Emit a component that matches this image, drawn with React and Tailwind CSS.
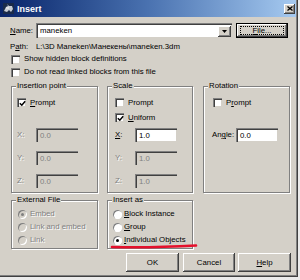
import React from "react";

const sunken =
  "border-t border-l border-[#808080] border-b-white border-r-white shadow-[inset_1px_1px_#404040,inset_-1px_-1px_#d4d0c8]";
const raised =
  "bg-[#d4d0c8] shadow-[inset_-1px_-1px_#404040,inset_1px_1px_#ffffff,inset_-2px_-2px_#808080]";
const dim = "text-[#808080] [text-shadow:1px_1px_#ffffff]";

const Check = ({ checked }) => (
  <span className={`w-[9px] h-[9px] shrink-0 bg-white flex items-center justify-center ${sunken}`}>
    {checked && (
      <svg width="7" height="7" viewBox="0 0 7 7">
        <path d="M0.8 3.2 L2.8 5.2 L6.2 1.2" stroke="#000" strokeWidth="1.5" fill="none" />
      </svg>
    )}
  </span>
);

const Radio = ({ checked, disabled }) => (
  <span
    className={`w-[9px] h-[9px] shrink-0 rounded-full flex items-center justify-center shadow-[inset_1px_1px_#808080,inset_-1px_-1px_#ffffff] ${
      disabled ? "bg-[#d4d0c8]" : "bg-white"
    }`}
  >
    {checked && <span className={`w-[3px] h-[3px] rounded-full ${disabled ? "bg-[#808080]" : "bg-black"}`} />}
  </span>
);

const Group = ({ title, className, children }) => (
  <div className={`relative border border-[#808080] shadow-[1px_1px_#ffffff,inset_1px_1px_#ffffff] ${className}`}>
    <span className="absolute -top-[6px] left-[4px] px-[1px] bg-[#d4d0c8] leading-[10px]">{title}</span>
    {children}
  </div>
);

const Field = ({ label, value, disabled, labelW }) => (
  <div className="flex items-center h-[14px]">
    <span className={`${labelW} ${disabled ? dim : ""}`}>{label}</span>
    <span
      className={`w-[42px] h-[14px] pl-[3px] flex items-center ${sunken} ${
        disabled ? "bg-[#d4d0c8] text-[#808080]" : "bg-white"
      }`}
    >
      {value}
    </span>
  </div>
);

const Button = ({ children, className }) => (
  <div className={`h-[19px] flex items-center justify-center ${raised} ${className}`}>{children}</div>
);

export default function App() {
  return (
    <div className="w-[300px] h-[280px] bg-[#ebebeb] font-['Liberation_Sans',Arial,sans-serif] text-[7.8px] leading-[10px] text-black">
      <div className="relative w-[298px] h-[277px] bg-[#d4d0c8] shadow-[inset_-1px_-1px_#404040,inset_-2px_-2px_#808080]">
        {/* title bar */}
        <div className="h-[17px] w-[296px] flex items-center bg-gradient-to-r from-[#0a246a] via-[#4a72b0] to-[#a6caf0] pl-[3px] pr-[1px]">
          <svg width="11" height="11" viewBox="0 0 11 11">
            <rect width="11" height="11" fill="#1a2a4a" />
            <path d="M1 8 L3 4 L5 3 L4 1 L6 3 L9 3 L10 6 L8 9 L6 7 L4 9 Z" fill="#c8ccd4" />
            <path d="M3 5 L6 5" stroke="#fff" strokeWidth="0.8" />
          </svg>
          <span className="ml-[3px] text-white font-bold text-[9px]">Insert</span>
          <div className={`ml-auto w-[11px] h-[10px] flex items-center justify-center ${raised}`}>
            <svg width="6" height="5" viewBox="0 0 6 5">
              <path d="M0.5 0.5 L5.5 4.5 M5.5 0.5 L0.5 4.5" stroke="#000" strokeWidth="1.3" />
            </svg>
          </div>
        </div>

        <div className="pl-[10px]">
          {/* name */}
          <div className="mt-[6px] flex items-center h-[15px]">
            <span className="w-[26px]">
              <u>N</u>ame:
            </span>
            <div className={`w-[196px] h-[15px] bg-white flex items-center pl-[3px] pr-[1px] ${sunken}`}>
              <span>maneken</span>
              <div className={`ml-auto w-[13px] h-[11px] flex items-center justify-center ${raised}`}>
                <svg width="5" height="3" viewBox="0 0 5 3">
                  <path d="M0 0 H5 L2.5 3 Z" fill="#000" />
                </svg>
              </div>
            </div>
            <div className="ml-[4px] w-[52px] h-[15px] border border-black">
              <div className={`w-full h-full px-[3px] py-[2px] ${raised}`}>
                <div className="w-full h-full flex items-center justify-center border border-dotted border-black">
                  <span className="leading-[8px]">
                    <u>F</u>ile...
                  </span>
                </div>
              </div>
            </div>
          </div>

          {/* path */}
          <div className="mt-[4px] h-[10px] flex items-center">
            <span className="w-[26px]">
              P<u>a</u>th:
            </span>
            <span>L:\3D Maneken\Манекены\maneken.3dm</span>
          </div>

          <div className="mt-[2px] h-[10px] flex items-center gap-[4px] ml-[1px]">
            <Check />
            <span>Show hidden block definitions</span>
          </div>
          <div className="mt-[3px] h-[10px] flex items-center gap-[4px] ml-[1px]">
            <Check />
            <span>Do not read linked blocks from this file</span>
          </div>

          {/* groups row */}
          <div className="mt-[9px] ml-[1px] flex">
            <Group title="Insertion point" className="w-[87px] h-[107px] pt-[11px] pl-[5px]">
              <div className="h-[9px] flex items-center gap-[4px]">
                <Check checked />
                <span>
                  <u>P</u>rompt
                </span>
              </div>
              <div className="mt-[21px]">
                <Field label="X:" value="0.0" disabled labelW="w-[19px]" />
              </div>
              <div className="mt-[9px]">
                <Field label="Y:" value="0.0" disabled labelW="w-[19px]" />
              </div>
              <div className="mt-[9px]">
                <Field label="Z:" value="0.0" disabled labelW="w-[19px]" />
              </div>
            </Group>

            <Group title="Scale" className="ml-[9px] w-[86px] h-[107px] pt-[11px] pl-[7px]">
              <div className="h-[9px] flex items-center gap-[4px]">
                <Check />
                <span>Prompt</span>
              </div>
              <div className="mt-[6px] h-[9px] flex items-center gap-[4px]">
                <Check checked />
                <span>
                  <u>U</u>niform
                </span>
              </div>
              <div className="mt-[6px]">
                <Field
                  label={
                    <>
                      <u>X</u>:
                    </>
                  }
                  value="1.0"
                  labelW="w-[20px]"
                />
              </div>
              <div className="mt-[9px]">
                <Field label="Y:" value="1.0" disabled labelW="w-[20px]" />
              </div>
              <div className="mt-[9px]">
                <Field label="Z:" value="1.0" disabled labelW="w-[20px]" />
              </div>
            </Group>

            <Group title="Rotation" className="ml-[10px] w-[87px] h-[107px] pt-[11px] pl-[8px]">
              <div className="ml-[1px] h-[9px] flex items-center gap-[4px]">
                <Check />
                <span>
                  P<u>r</u>ompt
                </span>
              </div>
              <div className="mt-[21px]">
                <Field
                  label={
                    <>
                      An<u>g</u>le:
                    </>
                  }
                  value="0.0"
                  labelW="w-[24px]"
                />
              </div>
            </Group>
          </div>

          {/* second row */}
          <div className="mt-[7px] ml-[1px] flex">
            <Group title="External File" className="w-[87px] h-[49px] pt-[8px] pl-[6px]">
              <div className="flex flex-col gap-[3px]">
                <div className="h-[10px] flex items-center gap-[3px]">
                  <Radio checked disabled />
                  <span className={dim}>Embed</span>
                </div>
                <div className="h-[10px] flex items-center gap-[3px]">
                  <Radio disabled />
                  <span className={dim}>Link and embed</span>
                </div>
                <div className="h-[10px] flex items-center gap-[3px]">
                  <Radio disabled />
                  <span className={dim}>Link</span>
                </div>
              </div>
            </Group>

            <Group title="Insert as" className="ml-[9px] w-[86px] h-[49px] pt-[8px] pl-[5px]">
              <div className="flex flex-col gap-[3px]">
                <div className="h-[10px] flex items-center gap-[2px]">
                  <Radio />
                  <span>
                    <u>B</u>lock Instance
                  </span>
                </div>
                <div className="h-[10px] flex items-center gap-[2px]">
                  <Radio />
                  <span>
                    <u>G</u>roup
                  </span>
                </div>
                <div className="h-[10px] flex items-center gap-[2px]">
                  <Radio checked />
                  <span>
                    <u>I</u>ndividual Objects
                  </span>
                </div>
              </div>
            </Group>
          </div>

          {/* buttons */}
          <div className="mt-[4px] ml-[116px] flex">
            <Button className="w-[53px]">OK</Button>
            <Button className="ml-[4px] w-[52px]">Cancel</Button>
            <Button className="ml-[3px] w-[53px]">
              <span>
                <u>H</u>elp
              </span>
            </Button>
          </div>
        </div>

        {/* red annotation */}
        <svg className="absolute left-[110px] top-[241px]" width="88" height="9" viewBox="0 0 88 9">
          <path d="M2 6 Q 40 7 86 4.5" stroke="#e5102c" strokeWidth="2.6" fill="none" strokeLinecap="round" />
        </svg>
      </div>
    </div>
  );
}
